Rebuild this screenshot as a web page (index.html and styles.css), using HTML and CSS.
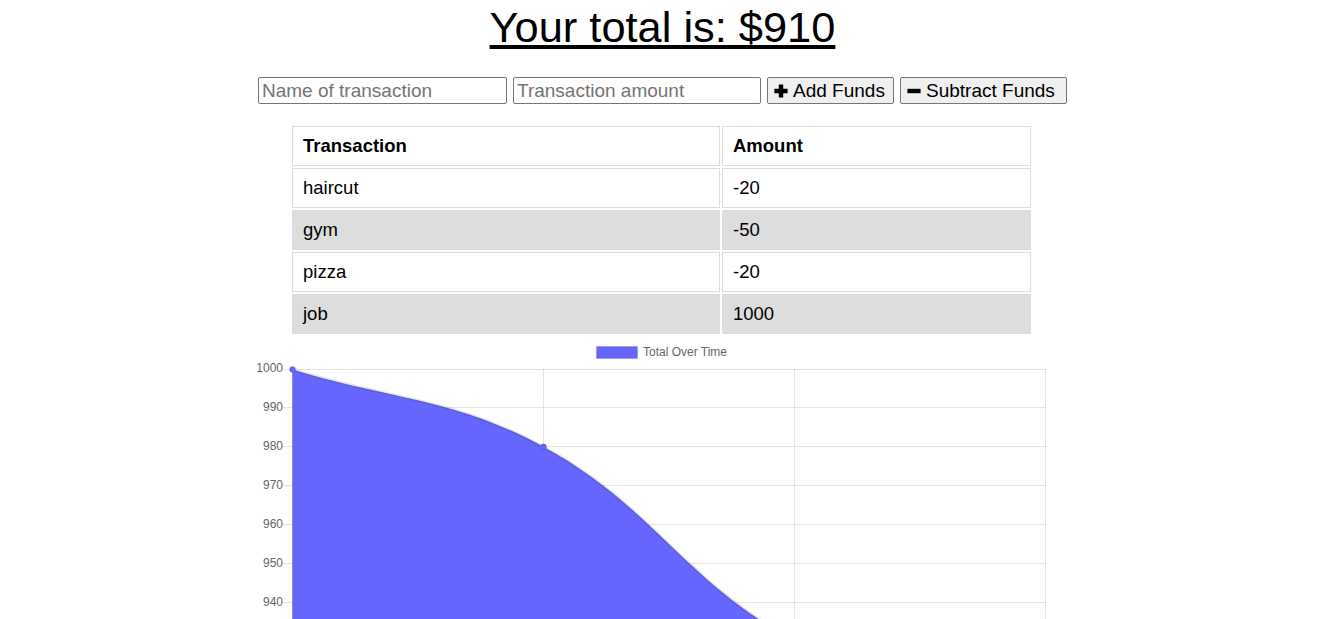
FILE: index.html
```html
<!DOCTYPE html>
<html lang="en">
<head>
<meta charset="utf-8">
<title>Budget Tracker</title>
<link rel="stylesheet" href="styles.css">
</head>
<body>
<div class="app">
  <h1 class="total">Your total is: $<span id="total">910</span></h1>

  <div class="controls">
    <input type="text" class="field field-name" placeholder="Name of transaction">
    <input type="number" class="field field-amount" placeholder="Transaction amount">
    <button class="btn btn-add" type="button">
      <svg class="icon" viewBox="0 0 14 14" width="14" height="14" aria-hidden="true"><path d="M4.8 0.4h4.4v4.4h4.4v4.4H9.2v4.4H4.8V9.2H0.4V4.8h4.4z"/></svg>
      <span>Add Funds</span>
    </button>
    <button class="btn btn-sub" type="button">
      <svg class="icon" viewBox="0 0 14 14" width="14" height="14" aria-hidden="true"><path d="M0.4 4.8h13.2v4.4H0.4z"/></svg>
      <span>Subtract Funds</span>
    </button>
  </div>

  <div class="table-wrap">
    <table class="tx">
      <thead>
        <tr><th class="col-name">Transaction</th><th>Amount</th></tr>
      </thead>
      <tbody>
        <tr><td>haircut</td><td>-20</td></tr>
        <tr><td>gym</td><td>-50</td></tr>
        <tr><td>pizza</td><td>-20</td></tr>
        <tr><td>job</td><td>1000</td></tr>
      </tbody>
    </table>
  </div>

  <div class="chart">
    <svg class="chart-svg" width="825" height="284" viewBox="0 0 825 284">
      <g class="legend">
        <rect x="346.5" y="10.5" width="41" height="12" fill="#6666ff" stroke="rgba(0,0,0,0.1)" stroke-width="1.5"/>
        <text x="393" y="20" class="legend-label">Total Over Time</text>
      </g>
      <g class="grid" stroke="rgba(0,0,0,0.1)" stroke-width="1">
        <line x1="33" y1="33.5" x2="796" y2="33.5"/>
        <line x1="33" y1="71.5" x2="796" y2="71.5"/>
        <line x1="33" y1="110.5" x2="796" y2="110.5"/>
        <line x1="33" y1="149.5" x2="796" y2="149.5"/>
        <line x1="33" y1="188.5" x2="796" y2="188.5"/>
        <line x1="33" y1="227.5" x2="796" y2="227.5"/>
        <line x1="33" y1="266.5" x2="796" y2="266.5"/>
        <line x1="293.5" y1="33" x2="293.5" y2="284"/>
        <line x1="544.5" y1="33" x2="544.5" y2="284"/>
        <line x1="795.5" y1="33" x2="795.5" y2="284"/>
      </g>
      <path class="area" d="M42.5,33.5 C142.4,64.1 202,61.4 293.5,110.7 C402.8,170.1 434.2,245.3 544.5,304.8 C635,354.1 694.6,351.4 795.5,382.5 L795.5,420 L42.5,420 Z" fill="#6666ff"/>
      <path class="line" d="M42.5,33.5 C142.4,64.1 202,61.4 293.5,110.7 C402.8,170.1 434.2,245.3 544.5,304.8 C635,354.1 694.6,351.4 795.5,382.5" fill="none" stroke="rgba(0,0,0,0.1)" stroke-width="3"/>
      <line x1="42.5" y1="33" x2="42.5" y2="284" stroke="rgba(0,0,0,0.22)" stroke-width="1"/>
      <circle cx="42.5" cy="33.5" r="3" fill="#6666ff" stroke="rgba(0,0,0,0.1)" stroke-width="1"/>
      <circle cx="293.5" cy="110.7" r="3" fill="#6666ff" stroke="rgba(0,0,0,0.1)" stroke-width="1"/>
      <g class="ticks">
        <text x="33" y="36">1000</text>
        <text x="33" y="75">990</text>
        <text x="33" y="114">980</text>
        <text x="33" y="153">970</text>
        <text x="33" y="192">960</text>
        <text x="33" y="231">950</text>
        <text x="33" y="270">940</text>
      </g>
    </svg>
  </div>
</div>
</body>
</html>
```

FILE: styles.css
```css
html, body {
  margin: 0;
  padding: 0;
  background: #ffffff;
}

body {
  font-family: "Liberation Sans", Arial, Helvetica, sans-serif;
  color: #000000;
}

.app {
  padding-right: 5px;
  text-align: center;
}

.total {
  margin: 3px 0 26px;
  font-size: 43.4px;
  line-height: 48px;
  font-weight: normal;
  text-decoration: underline;
}

.controls {
  display: flex;
  justify-content: center;
  gap: 6px;
}

.field {
  box-sizing: border-box;
  height: 27px;
  width: 249px;
  margin: 0;
  padding: 0 3px;
  border: 1px solid #767676;
  border-radius: 2px;
  font-family: "Liberation Sans", Arial, sans-serif;
  font-size: 19px;
  color: #000;
  background: #fff;
  -moz-appearance: textfield;
}

.field-amount {
  width: 248px;
}

.field::-webkit-outer-spin-button,
.field::-webkit-inner-spin-button {
  -webkit-appearance: none;
  margin: 0;
}

.field::placeholder {
  color: #757575;
}

.btn {
  box-sizing: border-box;
  display: inline-flex;
  align-items: center;
  gap: 5px;
  height: 27px;
  margin: 0;
  padding: 0 6px;
  border: 1px solid #767676;
  border-radius: 2px;
  background: #efefef;
  font-family: "Liberation Sans", Arial, sans-serif;
  font-size: 19px;
  color: #000;
}

.btn-add {
  width: 127px;
}

.btn-sub {
  width: 167px;
}

.icon {
  display: block;
  flex: none;
  fill: #000;
}

.table-wrap {
  padding-right: 2px;
  margin-top: 20px;
}

.tx {
  margin: 0 auto;
  width: 743px;
  table-layout: fixed;
  border-spacing: 2px;
  font-size: 18.5px;
}

.tx th,
.tx td {
  box-sizing: border-box;
  padding: 9px 10px;
  line-height: 20px;
  border: 1px solid #dddddd;
  text-align: left;
}

.tx th {
  font-weight: bold;
}

.tx .col-name {
  width: 428px;
}

.tx tbody tr:nth-child(even) td {
  background: #dddddd;
}

.chart-svg {
  display: block;
  margin: 0 auto;
  overflow: hidden;
}

.legend-label,
.ticks text {
  font-family: "Liberation Sans", Arial, sans-serif;
  font-size: 12px;
  fill: #666666;
}

.ticks text {
  text-anchor: end;
}
```
